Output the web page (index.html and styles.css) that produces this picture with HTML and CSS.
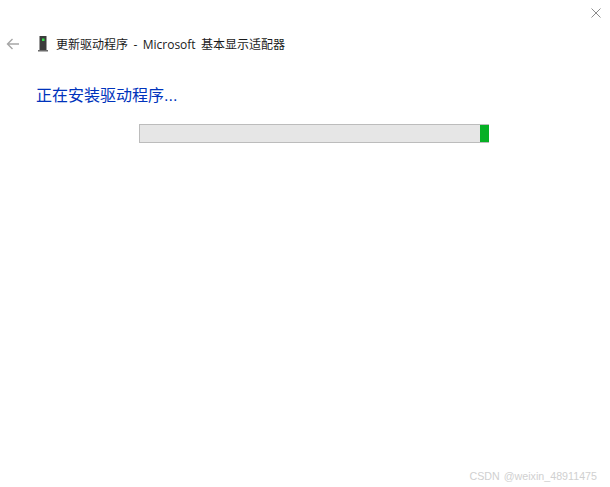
FILE: index.html
```html
<!DOCTYPE html>
<html lang="zh-CN">
<head>
  <meta charset="UTF-8">
  <meta name="viewport" content="width=device-width, initial-scale=1.0">
  <title>更新驱动程序</title>
  <link rel="stylesheet" href="styles.css">
</head>
<body>
  <div class="dialog">
    <!-- Close button -->
    <div class="top-row">
      <svg class="close-icon" width="10" height="10" viewBox="0 0 10 10" aria-label="关闭">
        <path d="M0.5 0.5L9.5 9.5M9.5 0.5L0.5 9.5" stroke="#8c8c8c" stroke-width="1" fill="none"/>
      </svg>
    </div>

    <!-- Title bar -->
    <header class="title-bar">
      <svg class="back-icon" width="14" height="12" viewBox="0 0 14 12" aria-label="返回">
        <path d="M13 6H1.5M6.5 1L1.5 6L6.5 11" stroke="#a6a6a6" stroke-width="1.4" fill="none"/>
      </svg>
      <svg class="device-icon" width="10" height="16" viewBox="0 0 10 16">
        <rect x="1.5" y="0" width="7" height="14" fill="#3b3b3b"/>
        <rect x="0" y="14" width="10" height="1.5" fill="#6b6b6b"/>
        <rect x="4" y="2.5" width="2.5" height="2.5" fill="#35e04a"/>
      </svg>
      <span class="title-text">更新驱动程序 - Microsoft 基本显示适配器</span>
    </header>

    <!-- Content -->
    <main class="content">
      <h1 class="heading">正在安装驱动程序...</h1>
      <div class="progress">
        <div class="progress-fill"></div>
      </div>
    </main>

    <div class="watermark">CSDN @weixin_48911475</div>
  </div>
</body>
</html>
```

FILE: styles.css
```css
/* Global */
body, html {
  margin: 0;
  padding: 0;
  height: 100%;
  background-color: #ffffff;
  font-family: "Noto Sans CJK SC", "Liberation Sans", sans-serif;
}

.dialog {
  position: relative;
  height: 487px;
  overflow: hidden;
}

/* Close button */
.top-row {
  display: flex;
  justify-content: flex-end;
  padding: 8px 9px 0 0;
  height: 10px;
}

.close-icon {
  display: block;
}

/* Title bar */
.title-bar {
  display: flex;
  align-items: center;
  height: 16px;
  margin-top: 18px;
  padding-left: 6px;
}

.back-icon {
  margin-right: 18px;
}

.device-icon {
  margin-right: 8px;
}

.title-text {
  font-family: "Open Sans", "Noto Sans CJK SC", sans-serif;
  font-size: 12px;
  word-spacing: 2.3px;
  color: #1a1a1a;
  white-space: nowrap;
}

/* Content */
.content {
  padding: 0 0 0 36px;
}

.heading {
  margin: 33px 0 0;
  font-family: "Liberation Sans", "Noto Sans CJK SC", sans-serif;
  font-size: 16px;
  line-height: 22px;
  font-weight: normal;
  color: #0033bc;
}

.progress {
  display: flex;
  justify-content: flex-end;
  box-sizing: border-box;
  width: 350px;
  height: 19px;
  margin: 17px 0 0 103px;
  background-color: #e6e6e6;
  border: 1px solid #bcbcbc;
  border-right: none;
}

.progress-fill {
  width: 9px;
  background-color: #06b025;
}

.watermark {
  position: absolute;
  right: 13px;
  top: 468px;
  font-family: "Liberation Sans", sans-serif;
  font-size: 10.7px;
  word-spacing: 1px;
  line-height: 16px;
  color: #d0d0d0;
  white-space: nowrap;
}
```
